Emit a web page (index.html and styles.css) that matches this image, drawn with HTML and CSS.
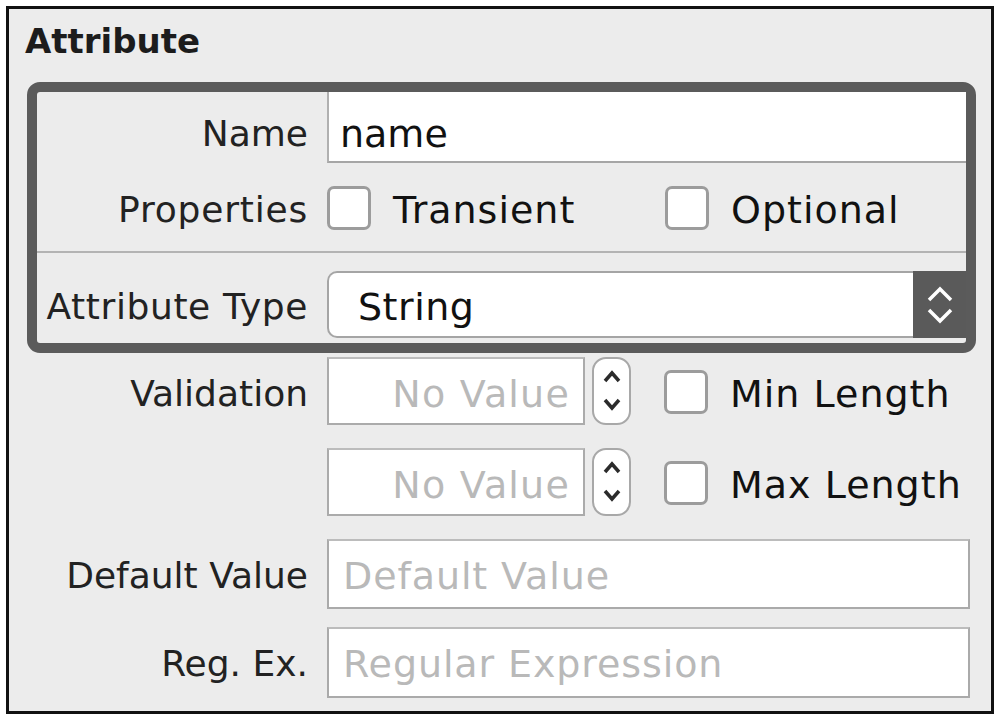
FILE: index.html
```html
<!DOCTYPE html>
<html lang="en">
<head>
<meta charset="utf-8">
<title>Attribute</title>
<link rel="stylesheet" href="styles.css">
</head>
<body>
<div class="frame">
  <div class="heading">Attribute</div>

  <div class="box">
    <div class="row row-name">
      <div class="label">Name</div>
      <div class="name-field">name</div>
    </div>
    <div class="row row-props">
      <div class="label">Properties</div>
      <div class="checks">
        <div class="check check-first"><span class="checkbox"></span><span class="check-text">Transient</span></div>
        <div class="check"><span class="checkbox"></span><span class="check-text">Optional</span></div>
      </div>
    </div>
    <div class="row row-type">
      <div class="label">Attribute Type</div>
      <div class="popup">
        <span class="popup-value">String</span>
        <span class="popup-arrows">
          <svg width="30" height="40" viewBox="0 0 30 40"><polyline points="4,15 15,4 26,15" /><polyline points="4,25 15,36 26,25" /></svg>
        </span>
      </div>
    </div>
  </div>

  <div class="fields">
    <div class="row row-v1">
      <div class="label">Validation</div>
      <div class="validation">
        <div class="number-field">No Value</div>
        <div class="stepper"><svg width="24" height="48" viewBox="0 0 24 48"><polyline points="5,14 12,6 19,14" /><polyline points="5,33 12,41 19,33" /></svg></div>
        <div class="check"><span class="checkbox"></span><span class="check-text">Min Length</span></div>
      </div>
    </div>
    <div class="row row-v2">
      <div class="label"></div>
      <div class="validation">
        <div class="number-field">No Value</div>
        <div class="stepper"><svg width="24" height="48" viewBox="0 0 24 48"><polyline points="5,14 12,6 19,14" /><polyline points="5,33 12,41 19,33" /></svg></div>
        <div class="check"><span class="checkbox"></span><span class="check-text">Max Length</span></div>
      </div>
    </div>
    <div class="row row-default">
      <div class="label">Default Value</div>
      <div class="text-input">Default Value</div>
    </div>
    <div class="row row-reg">
      <div class="label">Reg. Ex.</div>
      <div class="text-input">Regular Expression</div>
    </div>
  </div>
</div>
</body>
</html>
```

FILE: styles.css
```css
* { box-sizing: border-box; }

body {
  margin: 0;
  background: #ffffff;
  font-family: "DejaVu Sans", "Liberation Sans", sans-serif;
  color: #1a1a1a;
}

.frame {
  margin: 6px;
  width: 988px;
  height: 708px;
  border: 3px solid #111111;
  background: #ececec;
  padding-top: 12px;
}

.heading {
  margin-left: 16px;
  font-size: 34px;
  font-weight: bold;
  line-height: 40px;
  color: #1c1c1c;
}

.box {
  margin: 21px 15px 0 18px;
  border: 10px solid #5b5b5b;
  border-radius: 13px;
}

.row {
  display: grid;
  grid-template-columns: 271px 1fr;
  column-gap: 19px;
  align-items: start;
}

.label {
  font-size: 36px;
  line-height: 40px;
  text-align: right;
  color: #222222;
  white-space: nowrap;
}

/* Name */
.row-name .label { padding-top: 22px; }

.name-field {
  background: #ffffff;
  border-left: 2px solid #b0b0b0;
  border-bottom: 2px solid #a6a6a6;
  padding: 22px 12px 7px 11px;
  font-size: 38px;
  line-height: 40px;
  color: #111111;
}

/* Properties */
.row-props { height: 88px; }
.row-props .label { padding-top: 27px; letter-spacing: 0.8px; }

.checks {
  display: flex;
  padding-top: 23px;
}

.check {
  display: flex;
  align-items: flex-start;
  gap: 22px;
}

.check-first { width: 338px; }

.checkbox {
  flex: none;
  width: 44px;
  height: 44px;
  border: 3px solid #9c9c9c;
  border-radius: 7px;
  background: #ffffff;
}

.check-text {
  font-size: 38px;
  line-height: 40px;
  padding-top: 4px;
  letter-spacing: 1px;
  color: #111111;
  white-space: nowrap;
}

/* Attribute type */
.row-type {
  border-top: 2px solid #b3b3b3;
  padding: 18px 0 5px;
}
.row-type .label { padding-top: 16px; letter-spacing: 0.6px; }

.popup {
  display: flex;
  height: 67px;
  background: #ffffff;
  border: 2px solid #a5a5a5;
  border-right: none;
  border-radius: 10px 0 0 10px;
}

.popup-value {
  flex: 1;
  font-size: 38px;
  line-height: 40px;
  padding: 14px 0 0 29px;
  letter-spacing: 0.5px;
  color: #111111;
}

.popup-arrows {
  width: 53px;
  margin: -2px 0;
  background: #5a5a5a;
  display: flex;
  align-items: center;
  justify-content: center;
}

.popup-arrows polyline {
  fill: none;
  stroke: #ffffff;
  stroke-width: 3.5;
}

/* Lower fields */
.fields {
  margin: 4px 21px 0 28px;
}

.row-v1 { height: 68px; }
.row-v1 .label { padding-top: 17px; }
.row-v2 { height: 68px; margin-top: 23px; }
.row-default { margin-top: 23px; }
.row-reg { margin-top: 18px; }
.row-default .label,
.row-reg .label { padding-top: 17px; }

.validation {
  display: flex;
  align-items: flex-start;
}

.number-field {
  width: 258px;
  height: 68px;
  background: #ffffff;
  border: 2px solid #ababab;
  border-top-color: #bcbcbc;
  text-align: right;
  padding: 15px 13px 0 0;
  font-size: 38px;
  line-height: 40px;
  letter-spacing: 1.2px;
  color: #b9b9b9;
  white-space: nowrap;
}

.stepper {
  margin-left: 7px;
  width: 39px;
  height: 68px;
  border: 2px solid #a8a8a8;
  border-radius: 14px;
  background: #ffffff;
  display: flex;
  align-items: center;
  justify-content: center;
}

.stepper polyline {
  fill: none;
  stroke: #2b2b2b;
  stroke-width: 3.5;
}

.validation .check {
  margin-left: 33px;
  margin-top: 13px;
}

.text-input {
  height: 70px;
  background: #ffffff;
  border: 2px solid #aaaaaa;
  border-top-color: #bcbcbc;
  padding: 15px 0 0 14px;
  font-size: 38px;
  line-height: 40px;
  letter-spacing: 0.9px;
  color: #b9b9b9;
  white-space: nowrap;
}

.row-reg .text-input { height: 71px; }
```
